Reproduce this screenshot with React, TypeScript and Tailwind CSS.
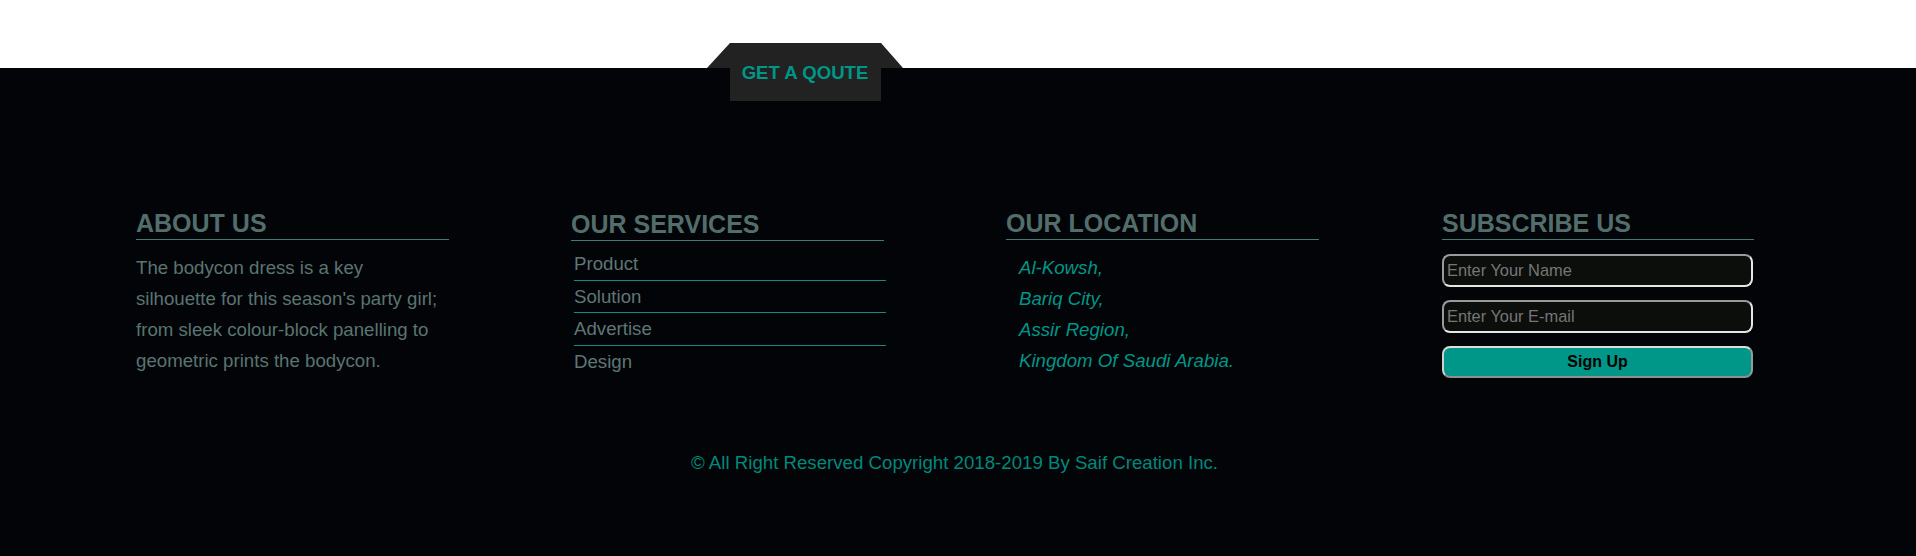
import React from "react";

const font = { fontFamily: '"Liberation Sans", Arial, sans-serif' };

function Heading({ children, className = "" }: { children: React.ReactNode; className?: string }) {
  return (
    <h3
      className={`text-[25px] leading-[28px] font-bold text-[#526e6c] pb-[2px] border-b border-[#3f7c79] ${className}`}
    >
      {children}
    </h3>
  );
}

function QuoteTab() {
  return (
    <div className="absolute left-[707px] top-[-25px] w-[196px] h-[58px]">
      <svg width="196" height="58" viewBox="0 0 196 58" className="absolute inset-0">
        <polygon points="23,0 174,0 196,25 174,25 174,58 23,58 23,25 0,25" fill="#222222" />
      </svg>
      <div className="relative flex h-full items-start justify-center pt-[19px]">
        <span className="text-[18.6px] leading-[22px] font-bold text-[#009688]">GET A QOUTE</span>
      </div>
    </div>
  );
}

export default function App() {
  const services = ["Product", "Solution", "Advertise", "Design"];
  const location = ["Al-Kowsh,", "Bariq City,", "Assir Region,", "Kingdom Of Saudi Arabia."];

  return (
    <div style={font} className="w-[1916px] h-[556px] bg-white overflow-hidden">
      <div className="h-[68px] bg-white" />
      <footer className="relative h-[488px] bg-[#030407]">
        <QuoteTab />

        <div className="flex pl-[136px] pt-[141px] gap-[123px]">
          {/* about */}
          <div className="w-[313px]">
            <Heading>ABOUT US</Heading>
            <p className="mt-[12px] w-[306px] text-[18.67px] leading-[31px] text-[#5a7472]">
              The bodycon dress is a key silhouette for this season's party girl; from sleek
              colour-block panelling to geometric prints the bodycon.
            </p>
          </div>

          {/* services */}
          <div className="w-[313px] -ml-[1px] pt-[1px]">
            <Heading>OUR SERVICES</Heading>
            <ul className="mt-[7px] ml-[3px] w-[312px]">
              {services.map((s, i) => (
                <li
                  key={s}
                  className={`text-[18.67px] leading-[31.5px] text-[#5f7676] ${
                    i < services.length - 1 ? "border-b border-[#0b8f84]" : ""
                  }`}
                >
                  {s}
                </li>
              ))}
            </ul>
          </div>

          {/* location */}
          <div className="w-[313px] -ml-[1px]">
            <Heading>OUR LOCATION</Heading>
            <ul className="mt-[12px] pl-[13px]">
              {location.map((l) => (
                <li key={l} className="text-[18.67px] leading-[31px] italic text-[#009688]">
                  {l}
                </li>
              ))}
            </ul>
          </div>

          {/* subscribe */}
          <div className="w-[312px]">
            <Heading>SUBSCRIBE US</Heading>
            <form className="mt-[14px] flex flex-col">
              <input
                type="text"
                placeholder="Enter Your Name"
                className="h-[33px] w-[311px] rounded-[8px] border-2 border-t-[#9a9a9a] border-l-[#9a9a9a] border-b-[#e6e6e6] border-r-[#e6e6e6] bg-[#0c0e0c] pl-[3px] text-[16.4px] text-[#bbbbbb] placeholder:text-[#767676] outline-none"
              />
              <input
                type="email"
                placeholder="Enter Your E-mail"
                className="mt-[13px] h-[33px] w-[311px] rounded-[8px] border-2 border-t-[#9a9a9a] border-l-[#9a9a9a] border-b-[#e6e6e6] border-r-[#e6e6e6] bg-[#0c0e0c] pl-[3px] text-[16.4px] text-[#bbbbbb] placeholder:text-[#767676] outline-none"
              />
              <button
                type="button"
                className="mt-[13px] h-[32px] w-[311px] rounded-[8px] border-2 border-t-[#dddddd] border-l-[#cfcfcf] border-b-[#8f8f8f] border-r-[#9a9a9a] bg-[#009688] text-[16px] font-bold text-black"
              >
                Sign Up
              </button>
            </form>
          </div>
        </div>

        <p className="mt-[75px] pr-[7px] text-center text-[18.67px] leading-[20px] text-[#00897b]">
          © All Right Reserved Copyright 2018-2019 By Saif Creation Inc.
        </p>
      </footer>
    </div>
  );
}
